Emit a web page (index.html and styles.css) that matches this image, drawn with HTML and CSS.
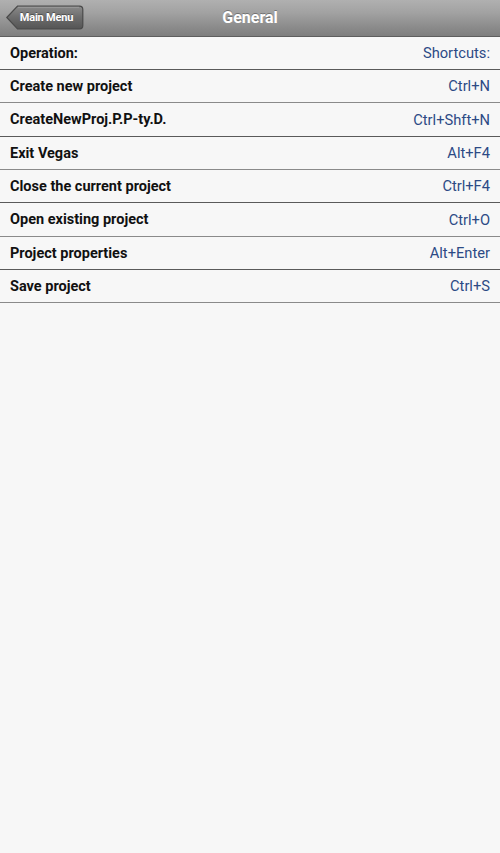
FILE: index.html
```html
<!DOCTYPE html>
<html>
<head>
<meta charset="utf-8">
<link rel="stylesheet" href="styles.css">
</head>
<body>
<div class="app">
  <header class="topbar">
    <div class="back">
      <svg class="back-shape" width="78" height="25" viewBox="0 0 78 25">
        <defs>
          <linearGradient id="bg" x1="0" y1="0" x2="0" y2="1">
            <stop offset="0" stop-color="#8a8a8a"/>
            <stop offset="0.5" stop-color="#6c6c6c"/>
            <stop offset="1" stop-color="#555555"/>
          </linearGradient>
        </defs>
        <path d="M0.8 12.5 L11.5 1.2 L73.5 1.2 Q76.8 1.2 76.8 4.5 L76.8 20.5 Q76.8 23.8 73.5 23.8 L11.5 23.8 Z" fill="url(#bg)" stroke="#4a4a4a" stroke-width="1.2"/>
        <path d="M12 2.3 L73 2.3" stroke="#9c9c9c" stroke-width="1"/>
      </svg>
      <span class="back-label">Main Menu</span>
    </div>
    <h1 class="title">General</h1>
    <div class="spacer"></div>
  </header>
  <ul class="list">
    <li class="row"><span class="op">Operation:</span><span class="key">Shortcuts:</span></li>
    <li class="row"><span class="op">Create new project</span><span class="key">Ctrl+N</span></li>
    <li class="row"><span class="op">CreateNewProj.P.P-ty.D.</span><span class="key">Ctrl+Shft+N</span></li>
    <li class="row"><span class="op">Exit Vegas</span><span class="key">Alt+F4</span></li>
    <li class="row"><span class="op">Close the current project</span><span class="key">Ctrl+F4</span></li>
    <li class="row"><span class="op">Open existing project</span><span class="key">Ctrl+O</span></li>
    <li class="row"><span class="op">Project properties</span><span class="key">Alt+Enter</span></li>
    <li class="row"><span class="op">Save project</span><span class="key">Ctrl+S</span></li>
  </ul>
</div>
</body>
</html>
```
FILE: styles.css
```css
html, body {
  margin: 0;
  padding: 0;
  background: #f7f7f7;
}
body {
  font-family: Roboto, "Liberation Sans", sans-serif;
  width: 500px;
  height: 853px;
}
.app {
  display: flex;
  flex-direction: column;
}
.topbar {
  height: 37px;
  box-sizing: border-box;
  display: flex;
  align-items: center;
  padding: 0 6px 1px 6px;
  background: linear-gradient(#b0b0b0 0%, #a2a2a2 35%, #8e8e8e 70%, #7e7e7e 100%);
  border-bottom: 1px solid #5e5e5e;
}
.back {
  position: relative;
  width: 78px;
  height: 25px;
  display: flex;
  align-items: center;
  justify-content: center;
}
.back-shape {
  position: absolute;
  left: 0;
  top: 0;
}
.back-label {
  position: relative;
  color: #ffffff;
  font-weight: bold;
  font-size: 11px;
  padding-left: 3px;
  letter-spacing: -0.2px;
  text-shadow: 0 -1px 0 rgba(0,0,0,0.35);
}
.title {
  flex: 1;
  margin: 0;
  text-align: center;
  color: #ffffff;
  font-size: 16px;
  font-weight: bold;
  text-shadow: 0 -1px 0 rgba(0,0,0,0.3);
}
.spacer {
  width: 78px;
}
.list {
  list-style: none;
  margin: 0;
  padding: 0;
}
.row {
  height: 33px;
  box-sizing: border-box;
  display: flex;
  align-items: center;
  justify-content: space-between;
  padding: 0 10px 0 10px;
  border-bottom: 1px solid #5a5a5a;
}
.row:nth-child(3n) {
  height: 34px;
}
.row:nth-child(even) {
  border-bottom-color: #8a8a8a;
}
.op {
  color: #111111;
  font-weight: bold;
  font-size: 14.5px;
}
.key {
  color: #2c4a85;
  font-size: 14.7px;
}
```
